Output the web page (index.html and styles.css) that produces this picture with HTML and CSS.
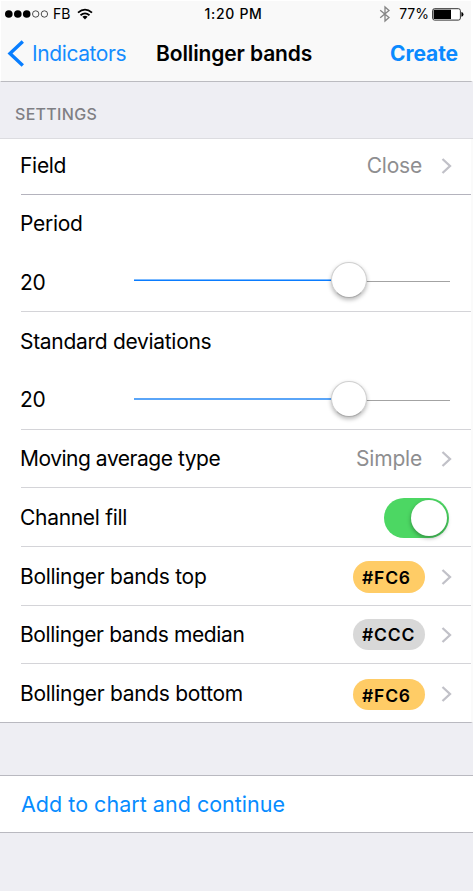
FILE: index.html
```html
<!DOCTYPE html>
<html lang="en">
<head>
<meta charset="utf-8">
<title>Bollinger bands</title>
<link rel="stylesheet" href="styles.css">
</head>
<body>
<header class="top">
  <div class="status">
    <div class="carrier">
      <svg class="signal" width="44" height="10" viewBox="0 0 44 10"><g fill="#000"><circle cx="4.8" cy="5" r="3.8"/><circle cx="13.8" cy="5" r="3.8"/><circle cx="22.7" cy="5" r="3.8"/></g><g fill="none" stroke="#222" stroke-width=".8"><circle cx="31.7" cy="5" r="3.2"/><circle cx="40.4" cy="5" r="3.2"/></g></svg>
      <span class="net">FB</span>
      <svg class="wifi" width="16" height="12" viewBox="0 0 16 12"><g fill="none" stroke="#000" stroke-width="1.8"><path d="M1 4.6Q8-1.4 15 4.6"/><path d="M3.5 7.3Q8 3.4 12.5 7.3"/></g><path d="M5.4 8.8Q8 6.9 10.6 8.8L8 11.6z"/></svg>
    </div>
    <span class="clock">1:20 PM</span>
    <div class="power">
      <svg width="12" height="18" viewBox="0 0 12 18"><path d="M1.2 5.2L10 12.4L6 16V2L10 5.6L1.2 12.8" fill="none" stroke="#858585" stroke-width="1.3"/></svg>
      <span class="percent">77%</span>
      <svg class="battery" width="32" height="13" viewBox="0 0 32 13"><rect x=".6" y=".7" width="27.8" height="11.4" rx="2" fill="#fff" stroke="#333" stroke-width="1"/><path d="M1.6 1.7H19V11H1.6z"/><path d="M29.4 4Q31.5 4.4 31.5 6.4T29.4 8.8z"/></svg>
    </div>
  </div>
  <nav class="nav">
    <a class="back"><svg width="18" height="28" viewBox="0 0 18 28"><path d="M15.8 1.4L3 13.4L15.8 25.4" fill="none" stroke="#087eff" stroke-width="3.4"/></svg><span class="back-label">Indicators</span></a>
    <h1 class="title">Bollinger bands</h1>
    <a class="create">Create</a>
  </nav>
</header>
<h2 class="section">SETTINGS</h2>
<main class="list">
  <div class="row first"><span class="field">Field</span><span class="value close">Close</span><svg class="chev" width="12" height="18" viewBox="0 0 12 18"><path d="M1.5 2L9 9L1.5 16"/></svg></div>
  <div class="row tall"><span class="period">Period</span>
    <div class="control"><span class="num">20</span><div class="slider"><i class="filled"></i><i class="rest"></i><b class="knob"></b></div></div>
  </div>
  <div class="row tall second"><span class="deviations">Standard deviations</span>
    <div class="control"><span class="num">20</span><div class="slider"><i class="filled"></i><i class="rest"></i><b class="knob"></b></div></div>
  </div>
  <div class="row average"><span class="moving">Moving average type</span><span class="value simple">Simple</span><svg class="chev" width="12" height="18" viewBox="0 0 12 18"><path d="M1.5 2L9 9L1.5 16"/></svg></div>
  <div class="row low"><span class="channel">Channel fill</span><div class="switch"><b></b></div></div>
  <div class="row low"><span class="band-top">Bollinger bands top</span><span class="pill">#FC6</span><svg class="chev" width="12" height="18" viewBox="0 0 12 18"><path d="M1.5 2L9 9L1.5 16"/></svg></div>
  <div class="row median"><span class="band-median">Bollinger bands median</span><span class="pill gray">#CCC</span><svg class="chev" width="12" height="18" viewBox="0 0 12 18"><path d="M1.5 2L9 9L1.5 16"/></svg></div>
  <div class="row last low"><span class="band-bottom">Bollinger bands bottom</span><span class="pill lower">#FC6</span><svg class="chev" width="12" height="18" viewBox="0 0 12 18"><path d="M1.5 2L9 9L1.5 16"/></svg></div>
</main>
<section class="action"><a>Add to chart and continue</a></section>
</body>
</html>
```
FILE: styles.css
```css
* { box-sizing: border-box; }
body {
  margin: 0;
  height: 891px;
  overflow: hidden;
  background: #eeeef3;
  color: #000;
  font: 21px/26px Inter, "Liberation Sans", sans-serif;
  letter-spacing: -0.3px;
}
h1, h2 { margin: 0; font-size: inherit; }
svg { display: block; flex: none; }
.top { height: 82px; background: #f9f9f9; border-top: 1px solid #fff; border-bottom: 1px solid #bbbbc0; border-left: 1px solid #fff; border-right: 2px solid #fff; }
.status { display: grid; grid-template-columns: 1fr auto 1fr; height: 26px; align-items: center; font-size: 14px; line-height: 18px; padding: 0 7px 0 3px; letter-spacing: 0; }
.carrier, .power { display: flex; align-items: center; }
.net { margin: 0 7px 0 5px; }
.clock { font-weight: 500; letter-spacing: 0.7px; margin-left: -1px; }
.power { justify-content: flex-end; }
.percent { margin: 0 3px 0 8px; }
.nav { display: grid; grid-template-columns: 149px 1fr auto; align-items: center; height: 53px; padding: 0 13px 0 6px; }
.back { display: flex; align-items: center; gap: 7px; color: #148cff; letter-spacing: -0.4px; }
.title { font-weight: 600; letter-spacing: -0.12px; }
.create { font-weight: 700; color: #0a8aff; letter-spacing: -0.1px; }
.section { height: 57px; border-bottom: 1px solid #dcdce0; padding: 19px 15px; font-size: 16px; line-height: 26px; font-weight: 500; letter-spacing: 0.3px; color: #7f7f84; }
.list { background: #fff; border-right: 2px solid #fafafa; border-bottom: 1px solid #b9b9c0; height: 584px; }
.row { display: flex; align-items: center; height: 59px; margin-left: 21px; border-bottom: 1px solid #d4d4d8; padding-right: 18px; }
.low { padding-top: 2px; }
.row > span:first-child { margin-left: -1px; }
.first { height: 56px; border-color: #b4b3bd; padding-bottom: 1px; }
.average, .median { height: 58px; }
.last { height: 58px; border: 0; }
.tall { display: block; height: 117px; padding-top: 16px; }
.second { height: 118px; padding-top: 17px; }
.tall > span { display: block; }
.control { display: flex; align-items: center; height: 36px; margin-top: 25px; margin-left: -1px; }
.second .control { margin-top: 26px; }
.num { width: 114px; padding-top: 5px; }
.second .num { padding-top: 2px; }
.slider { display: flex; flex: 1; position: relative; height: 36px; align-items: center; margin-right: 3px; }
.filled { width: 213px; height: 2px; background: linear-gradient(#7cbaff 50%, #0a7cff 50%); }
.second .filled { background: #5aa5f8; }
.rest { flex: 1; height: 1px; background: #a3a3a3; margin-top: 3px; }
.knob { position: absolute; left: 197px; top: 0; width: 36px; height: 36px; border-radius: 50%; background: #fff; border: 1px solid #d0d0d0; border-bottom-color: #aaa; box-shadow: 0 2px 4px rgba(0,0,0,.28); }
.value { margin-left: auto; color: #8e8e90; letter-spacing: -0.2px; }
.moving { letter-spacing: -0.48px; }
.band-median { letter-spacing: -0.38px; }
.chev { margin-left: 19px; fill: none; stroke: #c1c1c8; stroke-width: 2.3; }
.switch { margin-left: auto; margin-right: 4px; padding: 2px; width: 65px; height: 40px; border-radius: 20px; background: #4cd763; }
.switch b { display: block; width: 36px; height: 36px; margin-left: auto; border-radius: 50%; background: #fff; box-shadow: 0 2px 4px rgba(0,0,0,.35); }
.pill { margin-left: auto; margin-right: -3px; width: 72px; height: 32px; padding-left: 9px; border-radius: 16px; background: #ffcc66; font-size: 17.5px; line-height: 34px; font-weight: 600; letter-spacing: 0.8px; }
.gray { background: #d8d8d8; height: 31px; line-height: 32px; margin-top: -1px; }
.lower { height: 31px; margin-top: 1px; }
.action { height: 58px; margin-top: 52px; background: #fff; border: solid #b9b9c0; border-width: 1px 0; padding: 15px 21px; color: #068cff; font-size: 21.5px; letter-spacing: 0.02px; }
```
